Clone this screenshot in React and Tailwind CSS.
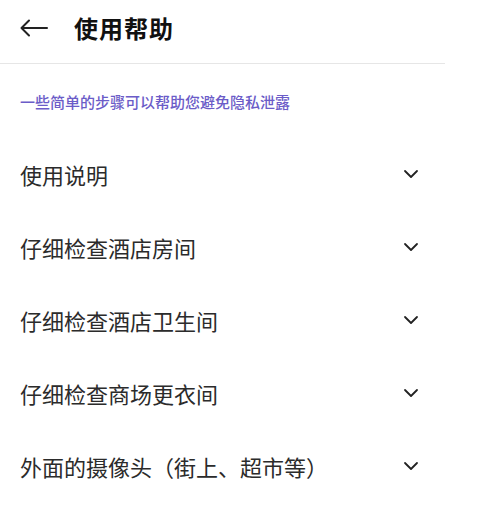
import React from 'react';

const items = [
  '使用说明',
  '仔细检查酒店房间',
  '仔细检查酒店卫生间',
  '仔细检查商场更衣间',
  '外面的摄像头（街上、超市等）',
];

const BackArrow = () => (
  <svg width="28" height="18" viewBox="0 0 28 18" fill="none" stroke="#222" strokeWidth="2" strokeLinecap="round" strokeLinejoin="round">
    <path d="M27 9H2" />
    <path d="M9 1.5L1.5 9L9 16.5" />
  </svg>
);

const Chevron = () => (
  <svg width="16" height="10" viewBox="0 0 16 10" fill="none" stroke="#222" strokeWidth="1.8" strokeLinecap="round" strokeLinejoin="round">
    <path d="M2 2l6 6 6-6" />
  </svg>
);

export default function App() {
  return (
    <div
      className="min-h-[515px] w-[493px] bg-white"
      style={{ fontFamily: '"Noto Sans CJK SC", "Noto Sans", sans-serif' }}
    >
      <div className="w-[445px]">
        <div className="flex h-16 items-center pb-[7px] pl-5 border-b border-[#e6e6e6]">
          <BackArrow />
          <h1 className="ml-[26px] text-[24px] font-bold tracking-[1px] text-[#111]">使用帮助</h1>
        </div>

        <p className="pt-[28px] pb-[25px] pl-5 text-[15px] leading-[20px] font-medium text-[#6b5cc8]">
          一些简单的步骤可以帮助您避免隐私泄露
        </p>

        <div>
          {items.map((item) => (
            <div key={item} className="flex h-[73.2px] items-center justify-between pl-5 pr-[26px]">
              <span className="text-[22px] leading-none text-[#2b2b2b]">{item}</span>
              <Chevron />
            </div>
          ))}
        </div>
      </div>
    </div>
  );
}
